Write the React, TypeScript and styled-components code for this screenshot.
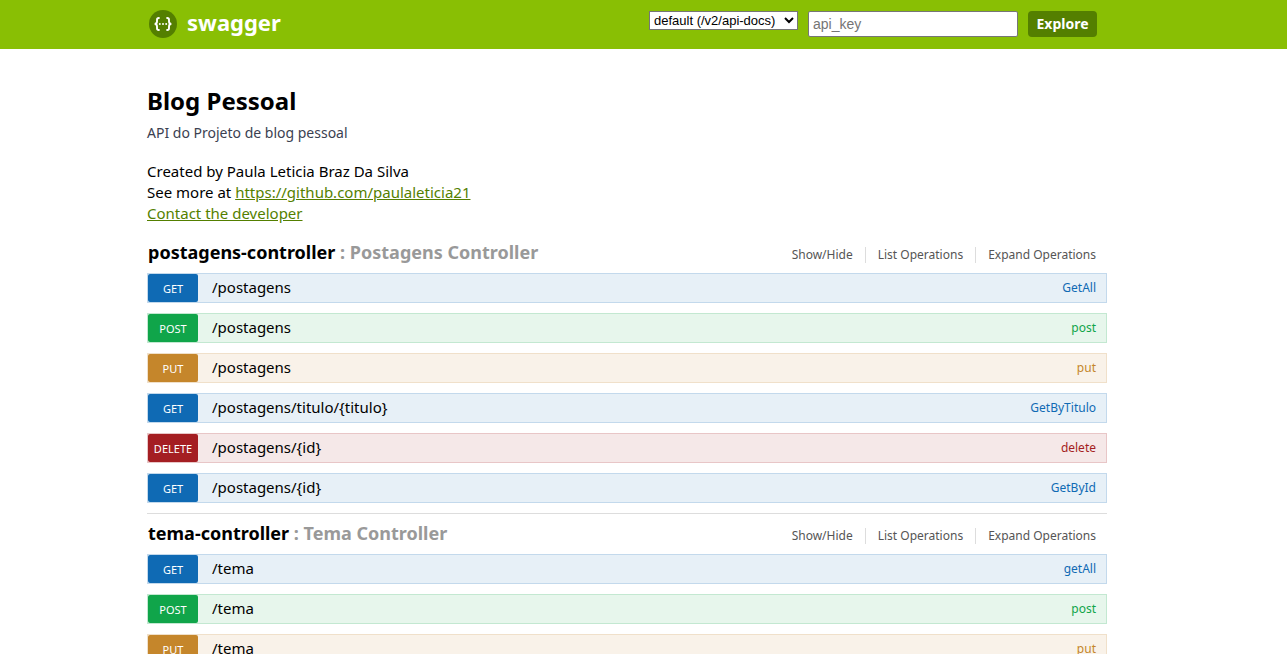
import React from "react";
import styled, { createGlobalStyle } from "styled-components";

type Method = "get" | "post" | "put" | "delete";

interface Operation {
  method: Method;
  path: string;
  summary: string;
}

interface Resource {
  name: string;
  description: string;
  operations: Operation[];
}

const palette: Record<Method, { solid: string; tint: string; line: string }> = {
  get: { solid: "#0f6ab4", tint: "#e7f0f7", line: "#c3d9ec" },
  post: { solid: "#10a54a", tint: "#e7f6ec", line: "#c3e8d1" },
  put: { solid: "#c5862b", tint: "#f9f2e9", line: "#f0e0ca" },
  delete: { solid: "#a41e22", tint: "#f5e8e8", line: "#e8c6c7" },
};

const resources: Resource[] = [
  {
    name: "postagens-controller",
    description: "Postagens Controller",
    operations: [
      { method: "get", path: "/postagens", summary: "GetAll" },
      { method: "post", path: "/postagens", summary: "post" },
      { method: "put", path: "/postagens", summary: "put" },
      { method: "get", path: "/postagens/titulo/{titulo}", summary: "GetByTitulo" },
      { method: "delete", path: "/postagens/{id}", summary: "delete" },
      { method: "get", path: "/postagens/{id}", summary: "GetById" },
    ],
  },
  {
    name: "tema-controller",
    description: "Tema Controller",
    operations: [
      { method: "get", path: "/tema", summary: "getAll" },
      { method: "post", path: "/tema", summary: "post" },
      { method: "put", path: "/tema", summary: "put" },
    ],
  },
];

const GlobalStyle = createGlobalStyle`
  *, *::before, *::after { box-sizing: border-box; }
  body {
    margin: 0;
    background: #fff;
    color: #000;
    font-family: "Droid Sans", "Noto Sans", sans-serif;
    font-size: 15px;
  }
  h1, h2, p, ul { margin: 0; padding: 0; }
  ul { list-style: none; }
`;

const TopBar = styled.header`
  background: #89bf04;
  padding-right: 33px;
`;

const TopBarInner = styled.div`
  max-width: 960px;
  height: 49px;
  margin: 0 auto;
  padding: 0 10px 2px 2px;
  display: flex;
  align-items: center;
  justify-content: space-between;
`;

const Logo = styled.a`
  display: flex;
  align-items: flex-start;
  gap: 10px;
  color: #fff;
  font-size: 22px;
  line-height: 24px;
  font-weight: 700;
  text-decoration: none;
`;

const ApiSelector = styled.form`
  display: flex;
  align-items: flex-start;
  gap: 10px;
`;

const SpecSelect = styled.select`
  width: 149px;
  height: 19px;
  padding: 0;
  border: 1px solid #767676;
  border-radius: 0;
  background-color: #fff;
  color: #000;
  font: 13px/16px "Liberation Sans", sans-serif;
`;

const KeyInput = styled.input`
  width: 210px;
  height: 26px;
  padding: 3px 4px;
  border: 1px solid #767676;
  border-radius: 2px;
  background: #fff;
  font: 14px/18px "Liberation Sans", sans-serif;
  &::placeholder { color: #757575; }
`;

const ExploreButton = styled.button`
  min-width: 69px;
  height: 26px;
  padding: 0 8px;
  border: 0;
  border-radius: 4px;
  background: #547f00;
  color: #fff;
  font: 700 14px/26px "Noto Sans", sans-serif;
`;

const Content = styled.main`
  padding-right: 33px;
`;

const ContentInner = styled.div`
  max-width: 960px;
  margin: 0 auto;
  padding-top: 36px;
`;

const Title = styled.h1`
  font-size: 24px;
  line-height: 32px;
  font-weight: 700;
`;

const Description = styled.p`
  color: #3b4151;
  font-size: 14px;
  line-height: 20px;
  margin-top: 6px;
`;

const Credits = styled.div`
  margin-top: 18px;
  line-height: 21px;
`;

const GreenLink = styled.a`
  color: #547f00;
`;

const ResourceList = styled.ul`
  margin-top: 9px;
`;

const ResourceBlock = styled.li`
  & + & { border-top: 1px solid #ddd; }
`;

const ResourceHeading = styled.div`
  display: flex;
  justify-content: space-between;
  align-items: center;
  height: 40px;
  padding: 0 11px 0 1px;
`;

const ResourceName = styled.h2`
  color: #999;
  font-size: 18px;
  line-height: 24px;
  font-weight: 700;
  padding-bottom: 3px;
`;

const NameLink = styled.a`
  color: #000;
  text-decoration: none;
`;

const Options = styled.ul`
  display: flex;
  margin-top: 4px;
`;

const Option = styled.li`
  font-size: 12px;
  line-height: 16px;
  & + & {
    margin-left: 12px;
    padding-left: 12px;
    border-left: 1px solid #ddd;
  }
`;

const OptionLink = styled.a`
  color: #555;
  text-decoration: none;
`;

const Operations = styled.ul`
  display: grid;
  gap: 10px;
  padding-bottom: 10px;
`;

const OperationRow = styled.li<{ $method: Method }>`
  display: flex;
  align-items: flex-start;
  height: 30px;
  padding-right: 10px;
  border: 1px solid ${({ $method }) => palette[$method].line};
  background: ${({ $method }) => palette[$method].tint};
`;

const MethodLink = styled.a<{ $method: Method }>`
  width: 50px;
  height: 28px;
  padding-top: 1px;
  border-radius: 2px;
  background: ${({ $method }) => palette[$method].solid};
  color: #fff;
  font-size: 11px;
  line-height: 28px;
  text-align: center;
  text-decoration: none;
  text-transform: uppercase;
`;

const PathLink = styled.a`
  flex: 1;
  padding-left: 14px;
  color: #000;
  line-height: 26px;
  text-decoration: none;
`;

const SummaryLink = styled.a<{ $method: Method }>`
  color: ${({ $method }) => palette[$method].solid};
  font-size: 12px;
  line-height: 28px;
  text-decoration: none;
`;

const LogoMark = () => (
  <svg width="28" height="28" viewBox="0 0 28 28" aria-hidden="true">
    <circle cx="14" cy="14" r="14" fill="#547f00" />
    <g fill="none" stroke="#fff" strokeWidth="1.9">
      <path d="M10.6 8H9.8Q8 8 8 9.8V11.6Q8 14 5.6 14Q8 14 8 16.4V18.2Q8 20 9.8 20H10.6" />
      <path d="M17.4 8H18.2Q20 8 20 9.8V11.6Q20 14 22.4 14Q20 14 20 16.4V18.2Q20 20 18.2 20H17.4" />
    </g>
    <g fill="#fff">
      <circle cx="10.8" cy="14" r="1" />
      <circle cx="14" cy="14" r="1" />
      <circle cx="17.2" cy="14" r="1" />
    </g>
  </svg>
);

export default function App() {
  return (
    <>
      <GlobalStyle />
      <TopBar>
        <TopBarInner>
          <Logo href="#">
            <LogoMark />
            swagger
          </Logo>
          <ApiSelector onSubmit={(e) => e.preventDefault()}>
            <SpecSelect aria-label="API specification">
              <option>default (/v2/api-docs)</option>
            </SpecSelect>
            <KeyInput type="text" placeholder="api_key" aria-label="api_key" />
            <ExploreButton type="submit">Explore</ExploreButton>
          </ApiSelector>
        </TopBarInner>
      </TopBar>
      <Content>
        <ContentInner>
          <Title>Blog Pessoal</Title>
          <Description>API do Projeto de blog pessoal</Description>
          <Credits>
            <p>Created by Paula Leticia Braz Da Silva</p>
            <p>
              See more at{" "}
              <GreenLink href="https://github.com/paulaleticia21">
                https://github.com/paulaleticia21
              </GreenLink>
            </p>
            <p>
              <GreenLink href="#contact">Contact the developer</GreenLink>
            </p>
          </Credits>
          <ResourceList>
            {resources.map((resource) => (
              <ResourceBlock key={resource.name}>
                <ResourceHeading>
                  <ResourceName>
                    <NameLink href={`#${resource.name}`}>{resource.name}</NameLink> :{" "}
                    {resource.description}
                  </ResourceName>
                  <Options>
                    {["Show/Hide", "List Operations", "Expand Operations"].map((label) => (
                      <Option key={label}>
                        <OptionLink href={`#${resource.name}`}>{label}</OptionLink>
                      </Option>
                    ))}
                  </Options>
                </ResourceHeading>
                <Operations>
                  {resource.operations.map((op) => (
                    <OperationRow key={op.method + op.path} $method={op.method}>
                      <MethodLink href="#operation" $method={op.method}>
                        {op.method}
                      </MethodLink>
                      <PathLink href="#operation">{op.path}</PathLink>
                      <SummaryLink href="#operation" $method={op.method}>
                        {op.summary}
                      </SummaryLink>
                    </OperationRow>
                  ))}
                </Operations>
              </ResourceBlock>
            ))}
          </ResourceList>
        </ContentInner>
      </Content>
    </>
  );
}
